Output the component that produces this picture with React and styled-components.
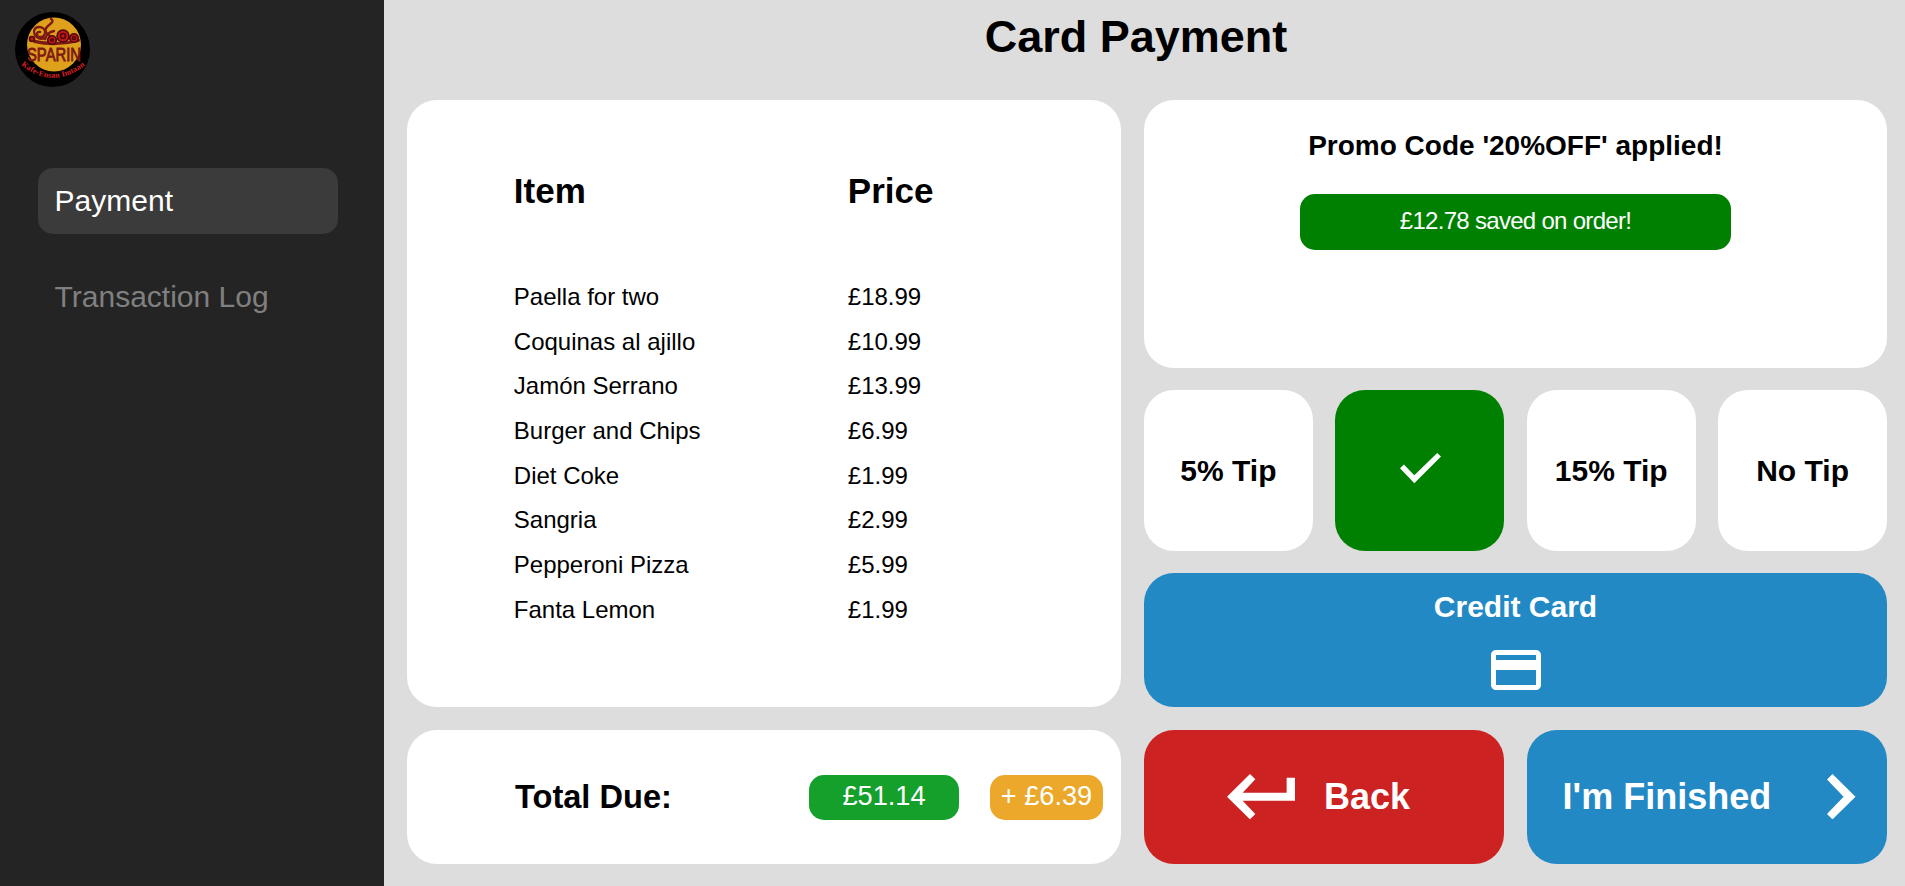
import React from "react";
import styled, { createGlobalStyle } from "styled-components";
import { MdPayment } from "react-icons/md";

const GlobalStyle = createGlobalStyle`
  * { box-sizing: border-box; }
  body {
    margin: 0;
    background: #ddd;
    color: #000;
    font-family: "Liberation Sans", Arial, sans-serif;
    overflow: hidden;
  }
  h1, h2, ul, p { margin: 0; padding: 0; }
  button { font-family: inherit; border: 0; margin: 0; padding: 0; }
`;

const Page = styled.div`
  display: flex;
  width: 100vw;
  height: 100vh;
`;

const Sidebar = styled.aside`
  flex: 0 0 384px;
  padding: 12px 46px 0 38px;
  background: #242424;
`;

const Logo = styled.svg`
  display: block;
  width: 76px;
  height: 76px;
  margin-left: -23px;
  overflow: visible;
`;

const Nav = styled.nav`
  display: flex;
  flex-direction: column;
  gap: 30px;
  margin-top: 80px;
`;

const NavItem = styled.a`
  display: flex;
  align-items: center;
  height: 66px;
  padding-left: 16.6px;
  border-radius: 15px;
  font-size: 30px;
  color: ${(p) => (p.$active ? "#fff" : "#808080")};
  background: ${(p) => (p.$active ? "#3b3b3b" : "transparent")};
`;

const Main = styled.main`
  flex: 1;
  min-width: 0;
  padding: 0 18px 0 23px;
`;

const Title = styled.h1`
  height: 100px;
  padding: 11px 22px 0 0;
  line-height: 52px;
  font-size: 45px;
  text-align: center;
`;

const Board = styled.div`
  display: grid;
  grid-template-columns: 714px 743px;
  justify-content: space-between;
`;

const Column = styled.div`
  display: grid;
  grid-template-rows: ${(p) => p.$rows};
  row-gap: 22.3px;
`;

const Card = styled.section`
  background: #fff;
  border-radius: 30px;
`;

const OrderCard = styled(Card)`
  padding: 70px 106px 0 106.8px;
`;

const Line = styled.li`
  display: grid;
  grid-template-columns: 334px 1fr;
  font-size: 24px;
  line-height: 44.7px;
`;

const LineHead = styled.div`
  display: grid;
  grid-template-columns: 334px 1fr;
  margin-bottom: 63.8px;
  font-size: 35px;
  font-weight: bold;
  line-height: 41px;
`;

const Lines = styled.ul`
  list-style: none;
`;

const TotalCard = styled(Card)`
  display: flex;
  align-items: center;
  padding: 1px 18px 0 108px;
`;

const TotalLabel = styled.h2`
  flex: 1;
  font-size: 32.6px;
`;

const Pill = styled.span`
  display: flex;
  align-items: center;
  justify-content: center;
  width: ${(p) => p.$width}px;
  height: 45px;
  margin-left: ${(p) => p.$gap || 0}px;
  border-radius: 15px;
  background: ${(p) => p.$color};
  color: #fff;
  font-size: 27.2px;
  padding-bottom: 2px;
  white-space: nowrap;
`;

const PromoCard = styled(Card)`
  display: flex;
  flex-direction: column;
  align-items: center;
  padding-top: 30px;
`;

const PromoTitle = styled.h2`
  font-size: 28px;
  line-height: 32px;
`;

const Saved = styled.p`
  width: 431px;
  height: 56px;
  margin-top: 32px;
  border-radius: 15px;
  background: #008000;
  color: #fff;
  font-size: 24px;
  letter-spacing: -0.7px;
  line-height: 53px;
  text-align: center;
`;

const Tips = styled.div`
  display: grid;
  grid-template-columns: repeat(4, 1fr);
  column-gap: 22.6px;
`;

const TipButton = styled.button`
  display: flex;
  align-items: center;
  justify-content: center;
  border-radius: 30px;
  background: ${(p) => (p.$selected ? "#008000" : "#fff")};
  color: ${(p) => (p.$selected ? "#fff" : "#000")};
  font-size: 30px;
  font-weight: bold;
`;

const CheckMark = styled.svg`
  width: 41px;
  height: 30.3px;
  margin: 0 0 4.6px 1px;
`;

const MethodButton = styled.button`
  display: flex;
  flex-direction: column;
  align-items: center;
  padding-top: 17px;
  border-radius: 30px;
  background: #2389c5;
  color: #fff;
  font-size: 30px;
  font-weight: bold;
  line-height: 34px;
`;

const CardIcon = styled(MdPayment)`
  width: 60px;
  height: 60px;
  margin-top: 15.6px;
`;

const Actions = styled.div`
  display: grid;
  grid-template-columns: 1fr 1fr;
  column-gap: 23px;
`;

const ActionButton = styled.button`
  display: flex;
  align-items: center;
  padding-left: ${(p) => p.$inset}px;
  border-radius: 30px;
  background: ${(p) => p.$color};
  color: #fff;
  font-size: 36px;
  font-weight: bold;
  gap: ${(p) => p.$gap}px;
  white-space: nowrap;
`;

const ActionIcon = styled.svg`
  flex: none;
  width: ${(p) => p.$width}px;
  height: 45.4px;
`;

const orders = [
  ["Paella for two", "£18.99"],
  ["Coquinas al ajillo", "£10.99"],
  ["Jamón Serrano", "£13.99"],
  ["Burger and Chips", "£6.99"],
  ["Diet Coke", "£1.99"],
  ["Sangria", "£2.99"],
  ["Pepperoni Pizza", "£5.99"],
  ["Fanta Lemon", "£1.99"],
];

const tips = ["5% Tip", "10% Tip", "15% Tip", "No Tip"];

function SparinLogo() {
  return (
    <Logo viewBox="0 0 76 76">
      <defs>
        <path id="rim" d="M6 53 Q38 79 72 52" />
      </defs>
      <circle cx="37.5" cy="37.5" r="37.5" fill="#000" />
      <circle cx="39" cy="32.5" r="27" fill="#dfa01c" />
      <g fill="none" stroke="#7d1a14" strokeWidth="2.4" strokeLinecap="round">
        <path d="M30 26C19 30 15 15 24 15c8 0 8 10 1 10-4 0-4-6 0-5" />
        <path d="M36 7c4 2-1 5-4 8s-1 7 2 8M30 27c2-6 5-7 9-8" />
      </g>
      <path d="M16 27Q39 33 66 27L64 30Q40 36 19 31Z" fill="#7d1a14" />
      <g fill="#c3161c" stroke="#4c0a0b" strokeWidth="1.6">
        <circle cx="17" cy="27" r="2.5" />
        <circle cx="37" cy="28" r="4.3" />
        <circle cx="48" cy="24" r="6" />
        <circle cx="59" cy="26" r="4.3" />
        <circle cx="37" cy="28" r="1.3" />
        <circle cx="48" cy="24" r="2.5" />
        <circle cx="59" cy="26" r="1.5" />
      </g>
      <text x="12" y="48.5" textLength="54" lengthAdjust="spacingAndGlyphs" fontSize="19" fill="#7d1a14" stroke="#7d1a14" strokeWidth="0.9">SPARIN</text>
      <text fontFamily="Liberation Serif, serif" fontSize="7.8" fontWeight="bold" fill="#e01f26">
        <textPath href="#rim" textLength="70">Kafe-Ensan Imtaan</textPath>
      </text>
    </Logo>
  );
}

function ReturnIcon() {
  return (
    <ActionIcon $width={68.3} viewBox="0 0 205 136" fill="currentColor">
      <path d="M0 68L69 0l16 16-38 40h132V11h26v69H47l38 40-16 16z" />
    </ActionIcon>
  );
}

function NextIcon() {
  return (
    <ActionIcon $width={28.5} viewBox="0 0 28.5 45.4" fill="currentColor">
      <path d="M5.5 0l23 22.7-23 22.7L0 40l16.6-17.3L0 5.4z" />
    </ActionIcon>
  );
}

export default function App() {
  return (
    <Page>
      <GlobalStyle />
      <Sidebar>
        <SparinLogo />
        <Nav>
          <NavItem $active>Payment</NavItem>
          <NavItem>Transaction Log</NavItem>
        </Nav>
      </Sidebar>
      <Main>
        <Title>Card Payment</Title>
        <Board>
          <Column $rows="607.4px 134px">
            <OrderCard>
              <LineHead>
                <span>Item</span>
                <span>Price</span>
              </LineHead>
              <Lines>
                {orders.map(([item, price]) => (
                  <Line key={item}>
                    <span>{item}</span>
                    <span>{price}</span>
                  </Line>
                ))}
              </Lines>
            </OrderCard>
            <TotalCard>
              <TotalLabel>Total Due:</TotalLabel>
              <Pill $width={150} $color="#14a02b">£51.14</Pill>
              <Pill $width={113} $gap={31} $color="#eba82a">+ £6.39</Pill>
            </TotalCard>
          </Column>
          <Column $rows="268px 160.8px 134px 134px">
            <PromoCard>
              <PromoTitle>Promo Code '20%OFF' applied!</PromoTitle>
              <Saved>£12.78 saved on order!</Saved>
            </PromoCard>
            <Tips>
              {tips.map((tip, i) => (
                <TipButton key={tip} $selected={i === 1}>
                  {i === 1 ? (
                    <CheckMark viewBox="0 0 41 30.3" fill="currentColor">
                      <path d="M0 15.2l3.9-3.6 10.4 10.6L37.2 0 41 3.6 14.3 30.3z" />
                    </CheckMark>
                  ) : (
                    tip
                  )}
                </TipButton>
              ))}
            </Tips>
            <MethodButton>
              Credit Card
              <CardIcon />
            </MethodButton>
            <Actions>
              <ActionButton $color="#cc2222" $inset={82.7} $gap={29}>
                <ReturnIcon />
                Back
              </ActionButton>
              <ActionButton $color="#2389c5" $inset={35.6} $gap={56}>
                I'm Finished
                <NextIcon />
              </ActionButton>
            </Actions>
          </Column>
        </Board>
      </Main>
    </Page>
  );
}
